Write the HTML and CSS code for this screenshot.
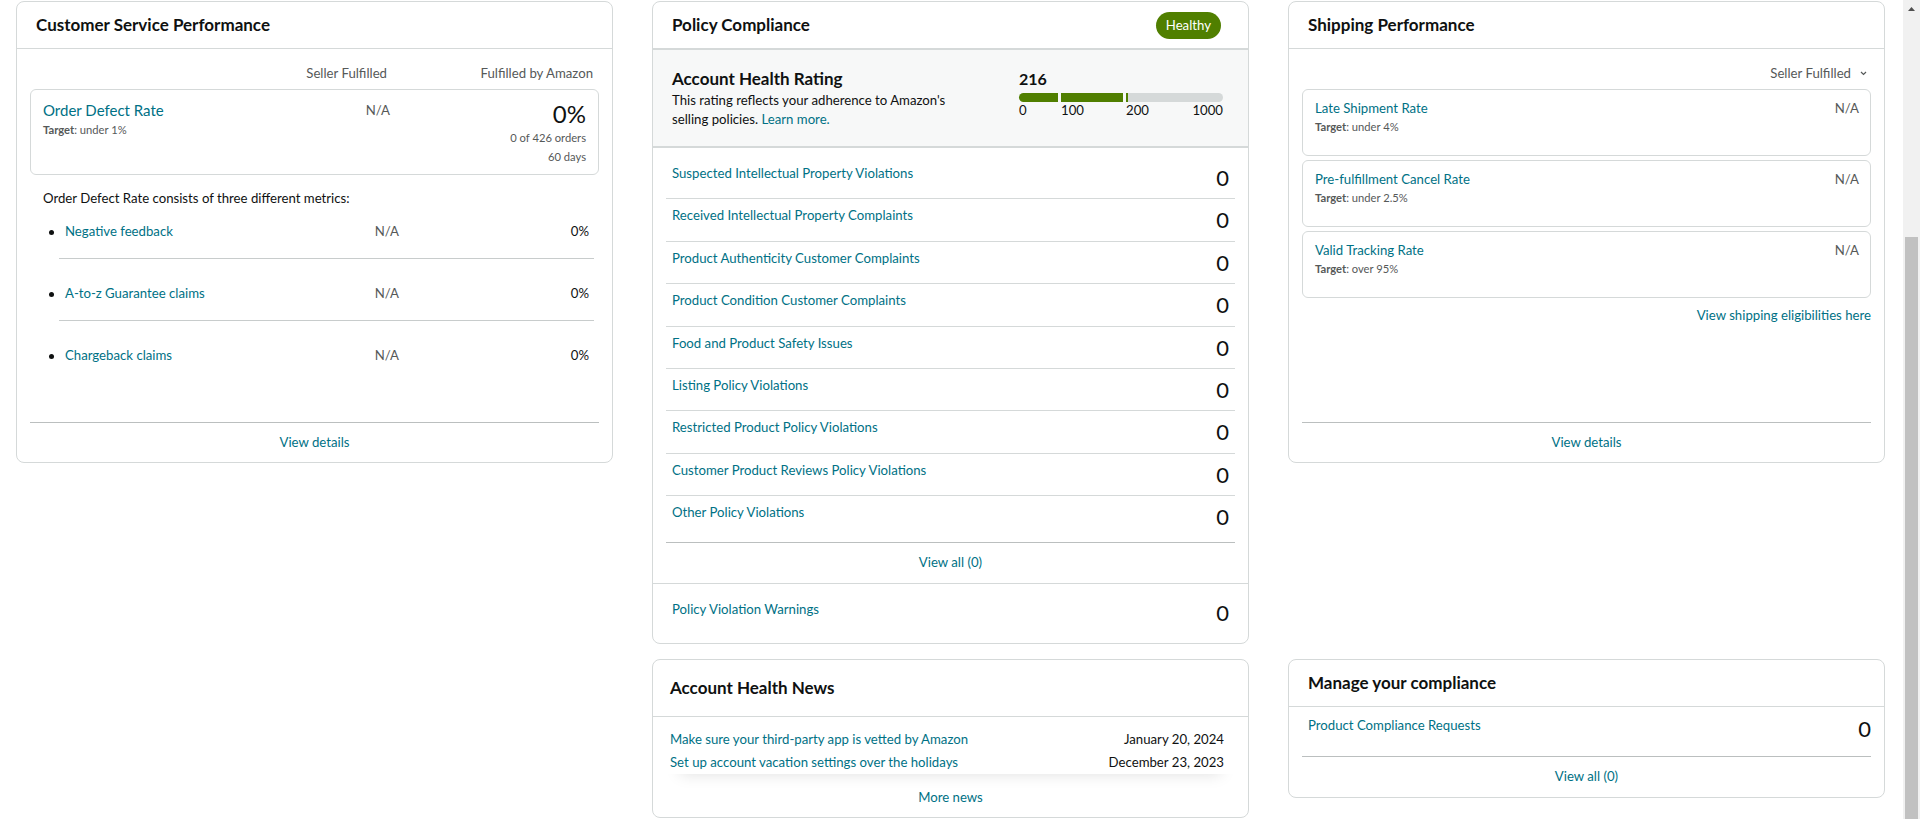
FILE: index.html
```html
<!DOCTYPE html>
<html lang="en">
<head>
<meta charset="utf-8">
<title>Account Health</title>
<link rel="stylesheet" href="styles.css">
</head>
<body>
<div class="viewport">
<main class="board">
  <section class="card card-tall csp">
    <div class="card-head"><h2 class="card-title">Customer Service Performance</h2></div>
    <div class="csp-body">
      <div class="colhead"><span></span><span>Seller Fulfilled</span><span>Fulfilled by Amazon</span></div>
      <div class="odr-box">
        <div>
          <a class="odr-title" href="#">Order Defect Rate</a>
          <div class="target"><b>Target</b>: under 1%</div>
        </div>
        <div class="muted right">N/A</div>
        <div class="right">
          <div class="big">0%</div>
          <div class="small">0 of 426 orders</div>
          <div class="small">60 days</div>
        </div>
      </div>
      <p class="odr-note">Order Defect Rate consists of three different metrics:</p>
      <ul class="odr-list">
        <li><a class="lbl" href="#">Negative feedback</a><span class="muted right">N/A</span><span class="right">0%</span></li>
        <li><a class="lbl" href="#">A-to-z Guarantee claims</a><span class="muted right">N/A</span><span class="right">0%</span></li>
        <li><a class="lbl" href="#">Chargeback claims</a><span class="muted right">N/A</span><span class="right">0%</span></li>
      </ul>
    </div>
    <div class="card-foot"><a href="#">View details</a></div>
  </section>

  <section class="card pc">
    <div class="card-head pc-head"><h2 class="card-title">Policy Compliance</h2><span class="badge">Healthy</span></div>
    <div class="ahr">
      <div class="ahr-text">
        <h3 class="ahr-title">Account Health Rating</h3>
        <p class="ahr-desc"><span class="ahr-line">This rating reflects your adherence to Amazon's</span><span class="ahr-line">selling policies. <a href="#">Learn more.</a></span></p>
      </div>
      <div class="ahr-score">
        <div class="score">216</div>
        <div class="bar"><span class="seg seg1"></span><span class="seg seg2"></span><span class="seg seg3"></span></div>
        <div class="scale"><span class="s0">0</span><span class="s1">100</span><span class="s2">200</span><span>1000</span></div>
      </div>
    </div>
    <ul class="pc-list">
      <li class="pc-row"><a href="#">Suspected Intellectual Property Violations</a><span class="num">0</span></li>
      <li class="pc-row"><a href="#">Received Intellectual Property Complaints</a><span class="num">0</span></li>
      <li class="pc-row"><a href="#">Product Authenticity Customer Complaints</a><span class="num">0</span></li>
      <li class="pc-row"><a href="#">Product Condition Customer Complaints</a><span class="num">0</span></li>
      <li class="pc-row"><a href="#">Food and Product Safety Issues</a><span class="num">0</span></li>
      <li class="pc-row"><a href="#">Listing Policy Violations</a><span class="num">0</span></li>
      <li class="pc-row"><a href="#">Restricted Product Policy Violations</a><span class="num">0</span></li>
      <li class="pc-row"><a href="#">Customer Product Reviews Policy Violations</a><span class="num">0</span></li>
      <li class="pc-row"><a href="#">Other Policy Violations</a><span class="num">0</span></li>
    </ul>
    <div class="pc-all"><a href="#">View all (0)</a></div>
    <div class="pc-warn"><a href="#">Policy Violation Warnings</a><span class="num">0</span></div>
  </section>

  <section class="card card-tall ship">
    <div class="card-head"><h2 class="card-title">Shipping Performance</h2></div>
    <div class="ship-body">
      <div class="ship-filter">Seller Fulfilled
        <svg class="chev" width="7" height="5" viewBox="0 0 7 5"><path d="M1 1l2.5 2.5L6 1" fill="none" stroke="#565959" stroke-width="1.2"/></svg>
      </div>
      <div class="metrics">
        <div class="metric"><div><a href="#">Late Shipment Rate</a><div class="target"><b>Target</b>: under 4%</div></div><span class="muted">N/A</span></div>
        <div class="metric"><div><a href="#">Pre-fulfillment Cancel Rate</a><div class="target"><b>Target</b>: under 2.5%</div></div><span class="muted">N/A</span></div>
        <div class="metric"><div><a href="#">Valid Tracking Rate</a><div class="target"><b>Target</b>: over 95%</div></div><span class="muted">N/A</span></div>
      </div>
      <a class="ship-link" href="#">View shipping eligibilities here</a>
    </div>
    <div class="card-foot"><a href="#">View details</a></div>
  </section>

  <section class="card news">
    <div class="card-head news-head"><h2 class="card-title">Account Health News</h2></div>
    <div class="news-list">
      <div class="news-item"><a href="#">Make sure your third-party app is vetted by Amazon</a><span>January 20, 2024</span></div>
      <div class="news-item"><a href="#">Set up account vacation settings over the holidays</a><span>December 23, 2023</span></div>
    </div>
    <div class="news-more"><a href="#">More news</a></div>
  </section>

  <section class="card manage">
    <div class="card-head"><h2 class="card-title">Manage your compliance</h2></div>
    <div class="mc-row"><a href="#">Product Compliance Requests</a><span class="num">0</span></div>
    <div class="mc-foot"><a href="#">View all (0)</a></div>
  </section>
</main>
</div>
<div class="vscroll" aria-hidden="true">
  <div class="vscroll-up"><svg width="7" height="4" viewBox="0 0 7 4"><path d="M0 4h7L3.5 0z" fill="#505050"/></svg></div>
  <div class="vscroll-gap"></div>
  <div class="vscroll-thumb"></div>
</div>
</body>
</html>
```

FILE: styles.css
```css
* { box-sizing: border-box; }
html, body { margin: 0; padding: 0; }
body {
  font-family: "Amazon Ember", Lato, "Liberation Sans", Arial, sans-serif;
  font-size: 13.2px;
  line-height: 20px;
  color: #0F1111;
  background: #fff;
  height: 819px;
  overflow: hidden;
  display: flex;
}
a { color: #007185; text-decoration: none; }
p, ul, h1, h2, h3 { margin: 0; padding: 0; }
ul { list-style: none; }

.viewport { flex: 1; min-width: 0; overflow: hidden; }

/* scrollbar look-alike of the screenshot */
.vscroll {
  width: 17px;
  flex: none;
  background: #F1F1F1;
  display: flex;
  flex-direction: column;
}
.vscroll-up { height: 17px; display: flex; align-items: center; justify-content: center; }
.vscroll-gap { height: 220px; }
.vscroll-thumb { flex: 1; margin: 0 2px; background: #C1C1C1; }

/* board */
.board {
  display: grid;
  grid-template-columns: 597px 597px 597px;
  column-gap: 39px;
  row-gap: 15px;
  padding: 1px 0 0 16px;
  align-items: start;
}
.card {
  border: 1px solid #D5D9D9;
  border-radius: 8px;
  background: #fff;
  display: flex;
  flex-direction: column;
  overflow: hidden;
}
.card-tall { height: 462px; }
.card-head {
  height: 47px;
  flex: none;
  display: flex;
  align-items: center;
  justify-content: space-between;
  padding: 0 19px;
  border-bottom: 1px solid #D5D9D9;
}
.card-title { font-size: 17px; line-height: 22px; font-weight: 700; }
.card-foot {
  margin: auto 13px 0;
  border-top: 1px solid #BBBFBF;
  padding: 9px 0 10px;
  text-align: center;
}
.muted { color: #565959; }
.right { text-align: right; }
.target { font-size: 11.2px; line-height: 18px; color: #565959; }
.target b { font-weight: 700; }
.num { font-size: 22px; line-height: 30px; color: #0F1111; }

/* customer service performance */
.csp-body { padding: 0 13px; }
.colhead {
  display: grid;
  grid-template-columns: 1fr 120px 206px;
  padding: 14px 6px 0 0;
  color: #565959;
  text-align: right;
}
.odr-box {
  margin-top: 6px;
  border: 1px solid #D5D9D9;
  border-radius: 6px;
  padding: 10px 12px 8px;
  display: grid;
  grid-template-columns: 1fr 100px 196px;
  align-items: start;
}
.odr-title { display: block; font-size: 15px; line-height: 20px; }
.odr-box .target { line-height: 20px; }
.big { font-size: 24px; line-height: 28px; }
.small { font-size: 11.2px; line-height: 19px; color: #565959; }
.odr-note { margin-top: 13px; padding-left: 13px; }
.odr-list { margin: 0 5px 0 29px; }
.odr-list li {
  display: grid;
  grid-template-columns: 1fr 100px 190px;
  padding: 24px 5px 17px 6px;
  border-bottom: 1px solid #C8CCCC;
}
.odr-list li:first-child { padding-top: 13px; }
.odr-list li:last-child { border-bottom: 0; }
.lbl::before {
  content: "";
  display: inline-block;
  width: 5px;
  height: 5px;
  border-radius: 50%;
  background: #0F1111;
  margin: 0 11px 0 -16px;
  vertical-align: middle;
}

/* policy compliance */
.pc-head { padding-right: 27px; }
.badge {
  background: #507F00;
  color: #fff;
  border-radius: 14px;
  height: 27px;
  line-height: 27px;
  padding: 0 10px;
  font-size: 13.2px;
}
.ahr {
  display: flex;
  justify-content: space-between;
  background: #F7F8F8;
  border-top: 1px solid #D5D9D9;
  border-bottom: 2px solid #D5D9D9;
  padding: 18px 25px 17px 19px;
}
.ahr-text { width: 300px; }
.ahr-title { font-size: 17px; line-height: 22px; font-weight: 700; }
.ahr-desc { margin-top: 1px; line-height: 19px; }
.ahr-line { display: block; }
.ahr-score { width: 204px; }
.score { font-size: 16px; line-height: 22px; font-weight: 700; }
.bar { display: flex; gap: 3px; height: 9px; margin-top: 3px; }
.seg { display: block; background: #507F00; }
.seg1 { width: 39px; border-radius: 5px 0 0 5px; }
.seg2 { width: 62px; }
.seg3 { flex: 1; background: linear-gradient(to right, #507F00 2px, #D5D9D9 2px); border-radius: 0 5px 5px 0; }
.scale { display: flex; line-height: 16px; }
.scale .s0 { width: 42px; }
.scale .s1 { width: 65px; }
.scale .s2 { flex: 1; }

.pc-list { margin: 0 13px; padding-top: 9px; }
.pc-row {
  display: flex;
  justify-content: space-between;
  align-items: flex-start;
  padding: 6px 6px 5.4px;
  border-bottom: 1px solid #D5D9D9;
}
.pc-row:last-child { border-bottom: 0; padding-bottom: 10px; }
.pc-all {
  margin: 0 13px;
  border-top: 1px solid #BBBFBF;
  padding: 9px 0 11px;
  text-align: center;
}
.pc-warn {
  display: flex;
  justify-content: space-between;
  align-items: flex-start;
  border-top: 1px solid #D5D9D9;
  padding: 14px 19px 15px;
}
.pc-warn a { padding-top: 1px; }

/* shipping */
.ship-body { padding: 0 13px; display: flex; flex-direction: column; }
.ship-filter {
  align-self: flex-end;
  display: flex;
  align-items: center;
  gap: 9px;
  padding: 14px 4px 0 0;
  color: #565959;
}
.metrics { display: flex; flex-direction: column; gap: 4px; margin-top: 6px; }
.metric {
  border: 1px solid #D5D9D9;
  border-radius: 6px;
  height: 67px;
  padding: 8px 11px 0 12px;
  display: flex;
  justify-content: space-between;
  align-items: flex-start;
}
.ship-link { align-self: flex-end; margin-top: 7px; }

/* news */
.news { grid-column: 2; }
.news-head { height: 57px; padding-left: 17px; }
.news-list {
  margin: 0 13px;
  padding: 11px 11px 0 4px;
  box-shadow: 0 14px 16px -14px rgba(15, 17, 17, 0.13);
}
.news-item { display: flex; justify-content: space-between; line-height: 23px; }
.news-more { padding: 13px 0 10px; text-align: center; }

/* manage compliance */
.manage { grid-column: 3; }
.mc-row {
  margin: 0 13px;
  display: flex;
  justify-content: space-between;
  align-items: flex-start;
  padding: 7px 0 12px 6px;
  border-bottom: 1px solid #BBBFBF;
}
.mc-row a { padding-top: 1px; }
.mc-foot { padding: 9px 0 11px; text-align: center; }
```
